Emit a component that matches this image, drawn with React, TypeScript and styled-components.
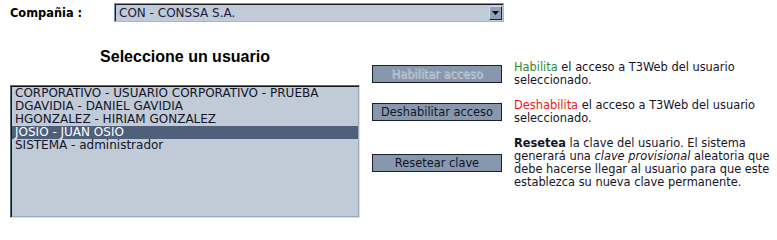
import styled, { createGlobalStyle } from "styled-components";

const GlobalStyle = createGlobalStyle`
  body {
    margin: 0;
    background: #ffffff;
    font-family: "DejaVu Sans", Verdana, sans-serif;
    font-size: 11.4px;
    color: #141428;
  }
`;

const Page = styled.div`
  width: 777px;
  height: 233px;
  overflow: hidden;
`;

const TopRow = styled.div`
  display: flex;
  align-items: center;
  padding: 3px 0 0 10px;
  height: 19px;
`;

const Label = styled.label`
  width: 104px;
  font-weight: bold;
  color: #000;
`;

const Select = styled.div`
  width: 390px;
  height: 19px;
  box-sizing: border-box;
  display: flex;
  align-items: center;
  justify-content: space-between;
  background: #c0cbd7;
  border: 1px solid;
  border-color: #7d8fa6 #a6b6c8 #a6b6c8 #7d8fa6;
  box-shadow: inset 1px 1px 0 #1b1b1b;
  padding: 0 1px 0 4px;
  font-size: 12px;
  color: #1a1a40;
`;

const ArrowButton = styled.span`
  width: 13px;
  height: 14px;
  box-sizing: border-box;
  display: flex;
  align-items: center;
  justify-content: center;
  background: #8fa1b8;
  border: 1px solid;
  border-color: #d3dbe4 #1e2530 #1e2530 #d3dbe4;
`;

const Main = styled.div`
  display: flex;
  align-items: flex-start;
  margin-top: 26px;
`;

const LeftColumn = styled.div`
  width: 350px;
  margin-left: 10px;
`;

const Heading = styled.h2`
  margin: 0 0 19px;
  font-family: "Liberation Sans", Arial, sans-serif;
  font-size: 16px;
  line-height: 18px;
  font-weight: bold;
  text-align: center;
  color: #000;
`;

const ListBox = styled.div`
  height: 133px;
  box-sizing: border-box;
  background: #c0cbd7;
  border: 1px solid;
  border-color: #5a6878 #dbe2ea #dbe2ea #5a6878;
  box-shadow: inset 1px 1px 0 #151515, inset -1px -1px 0 #97a9bf;
  padding: 1px 1px;
  font-size: 12px;
`;

const Option = styled.div<{ $selected?: boolean }>`
  height: 13px;
  line-height: 13px;
  padding-left: 3px;
  white-space: nowrap;
  background: ${(p) => (p.$selected ? "#4e607a" : "transparent")};
  color: ${(p) => (p.$selected ? "#ffffff" : "#141428")};
`;

const Actions = styled.div`
  display: grid;
  grid-template-columns: 130px 262px;
  align-content: start;
  column-gap: 12px;
  row-gap: 12px;
  align-items: center;
  margin: 13px 0 0 12px;
`;

const ActionButton = styled.button`
  width: 130px;
  height: 18px;
  padding: 0;
  font-family: "DejaVu Sans", Verdana, sans-serif;
  font-size: 11.4px;
  line-height: 16px;
  background: #8798ae;
  border: 1px solid #1a2029;
  color: #141428;
  &:disabled {
    color: #a9b6c6;
    text-shadow: 1px 1px 0 #c3ccd7;
  }
`;

const Description = styled.p`
  margin: 0;
  line-height: 13px;
  color: #141428;
`;

const Green = styled.span`
  color: #2e8b2e;
`;

const Red = styled.span`
  color: #f01818;
`;

const users = [
  "CORPORATIVO - USUARIO CORPORATIVO - PRUEBA",
  "DGAVIDIA - DANIEL GAVIDIA",
  "HGONZALEZ - HIRIAM GONZALEZ",
  "JOSIO - JUAN OSIO",
  "SISTEMA - administrador",
];

export default function App() {
  const selected = "JOSIO - JUAN OSIO";

  return (
    <Page>
      <GlobalStyle />
      <TopRow>
        <Label>Compañia :</Label>
        <Select>
          <span>CON - CONSSA S.A.</span>
          <ArrowButton>
            <svg width="7" height="4" viewBox="0 0 7 4">
              <polygon points="0,0 7,0 3.5,4" fill="#000" />
            </svg>
          </ArrowButton>
        </Select>
      </TopRow>
      <Main>
        <LeftColumn>
          <Heading>Seleccione un usuario</Heading>
          <ListBox>
            {users.map((u) => (
              <Option key={u} $selected={u === selected}>
                {u}
              </Option>
            ))}
          </ListBox>
        </LeftColumn>
        <Actions>
          <ActionButton disabled>Habilitar acceso</ActionButton>
          <Description>
            <Green>Habilita</Green> el acceso a T3Web del usuario seleccionado.
          </Description>
          <ActionButton>Deshabilitar acceso</ActionButton>
          <Description>
            <Red>Deshabilita</Red> el acceso a T3Web del usuario seleccionado.
          </Description>
          <ActionButton>Resetear clave</ActionButton>
          <Description>
            <b>Resetea</b> la clave del usuario. El sistema generará una{" "}
            <i>clave provisional</i> aleatoria que debe hacerse llegar al
            usuario para que este establezca su nueva clave permanente.
          </Description>
        </Actions>
      </Main>
    </Page>
  );
}
